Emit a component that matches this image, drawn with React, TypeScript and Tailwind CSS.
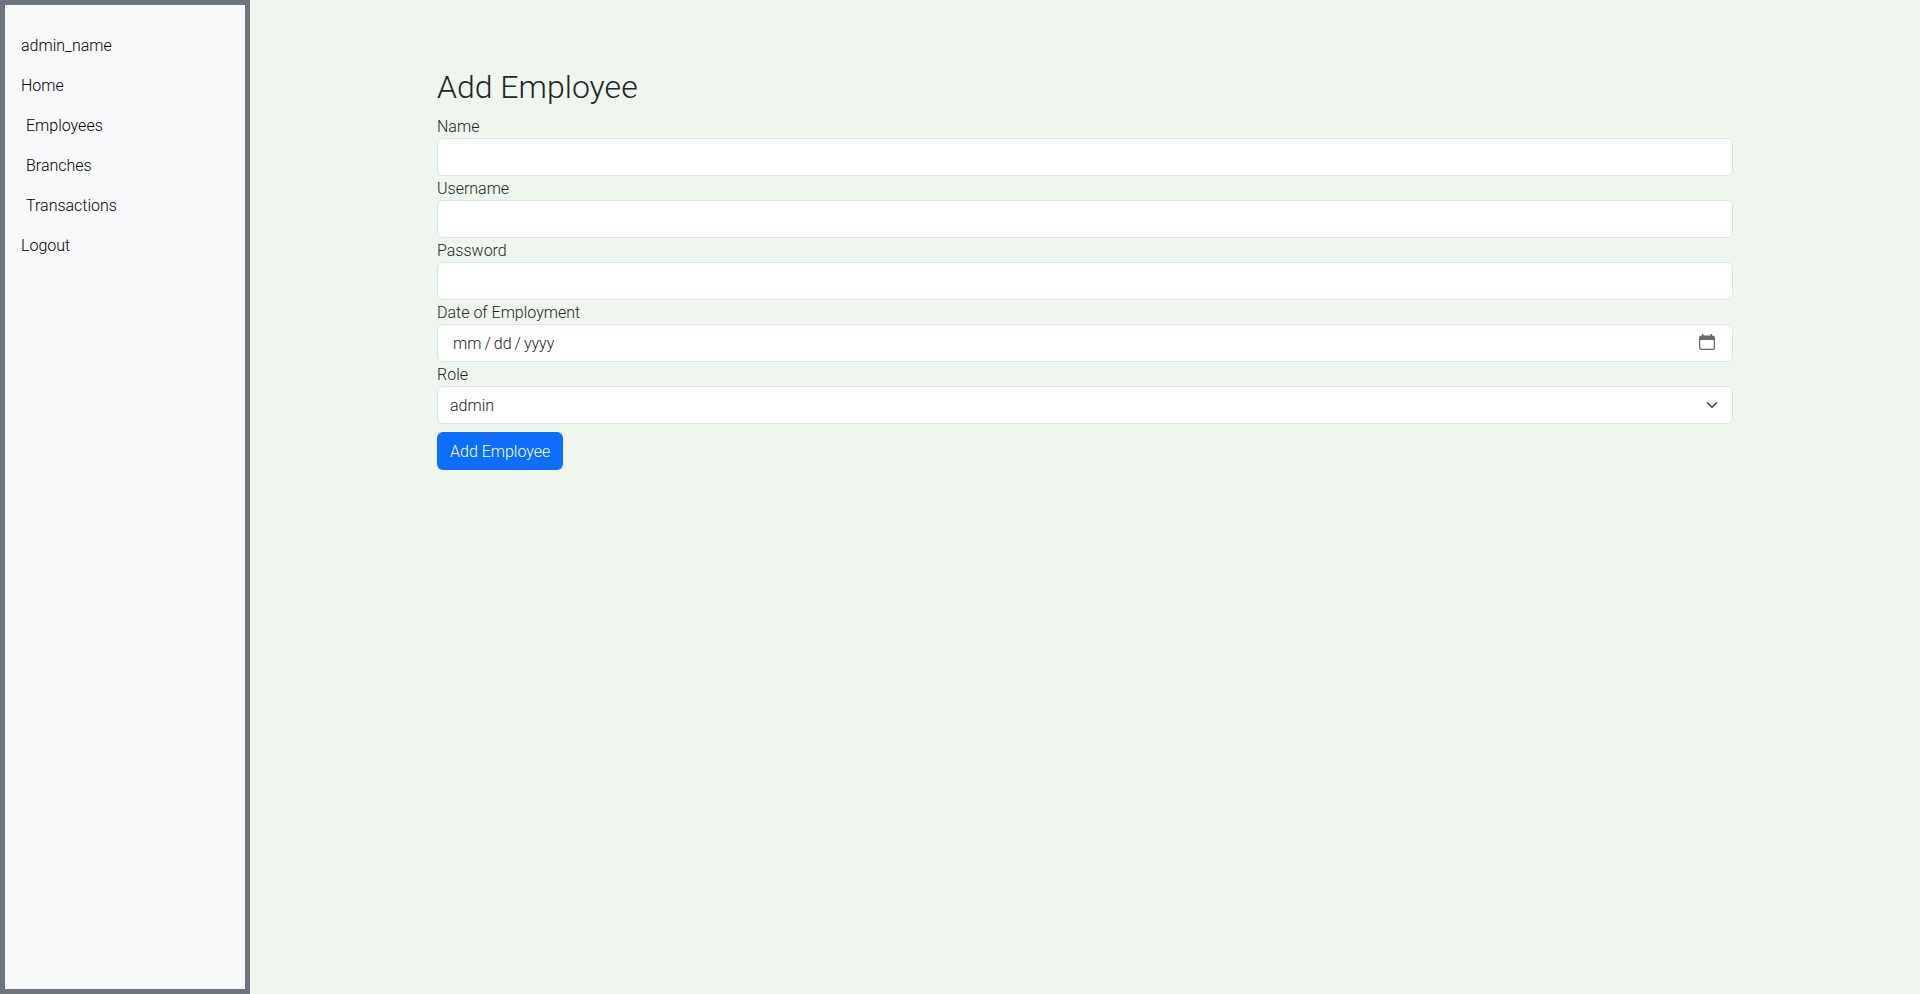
import React from "react";

const navItems = [
  { label: "admin_name", nested: false },
  { label: "Home", nested: false },
  { label: "Employees", nested: true },
  { label: "Branches", nested: true },
  { label: "Transactions", nested: true },
  { label: "Logout", nested: false },
];

const fields = [
  { id: "name", label: "Name", type: "text" },
  { id: "username", label: "Username", type: "text" },
  { id: "password", label: "Password", type: "password" },
];

const label = "block h-6 leading-[26px]";

const control =
  "block h-[38px] w-full rounded-md border border-[#dee2e6] bg-white px-3 pt-0.5 text-base font-light text-[#212529] outline-none focus:border-[#86b7fe]";

const dateParts =
  "[&::-webkit-datetime-edit]:pl-0.5 [&::-webkit-datetime-edit-text]:px-0.5 [&::-webkit-calendar-picker-indicator]:opacity-0";

function CalendarIcon() {
  return (
    <svg
      viewBox="0 0 16 16"
      className="pointer-events-none col-start-1 row-start-1 mr-[18px] mb-0.5 size-4 justify-self-end text-[#69696d]"
      aria-hidden="true"
    >
      <path
        fill="currentColor"
        fillRule="evenodd"
        d="M3 0h1.5v1.5h7V0H13v1.5h.5A2.5 2.5 0 0 1 16 4v9.500a2.500 2.500 0 0 1-2.500 2.500h-11A2.500 2.500 0 0 1 0 13.500V4a2.500 2.500 0 0 1 2.500-2.500H3zM1.250 6v7.500c0 .7.550 1.250 1.250 1.250h11c.7 0 1.250-.550 1.250-1.250V6z"
      />
    </svg>
  );
}

export default function App() {
  return (
    <div className="flex min-h-screen bg-[#eef6ed] font-[Roboto,sans-serif] text-base leading-6 font-light text-[#212529]">
      <nav className="w-[250px] shrink-0 border-[5px] border-[#6c757d] bg-[#f8f9fa] px-4 pt-[21px]">
        <ul>
          {navItems.map((item) => (
            <li key={item.label} className={item.nested ? "pl-[5px]" : ""}>
              <a href="#" className="block py-2 text-black">
                {item.label}
              </a>
            </li>
          ))}
        </ul>
      </nav>
      <main className="min-w-0 flex-1 px-[187px] pt-[68px]">
        <h1 className="mb-2 text-[32px] leading-[38px] font-light">Add Employee</h1>
        <form onSubmit={(e) => e.preventDefault()}>
          {fields.map((f) => (
            <div key={f.id}>
              <label htmlFor={f.id} className={label}>
                {f.label}
              </label>
              <input id={f.id} type={f.type} className={control} />
            </div>
          ))}
          <label htmlFor="date" className={label}>
            Date of Employment
          </label>
          <div className="grid items-center">
            <input id="date" type="date" className={`${control} ${dateParts} col-start-1 row-start-1`} />
            <CalendarIcon />
          </div>
          <label htmlFor="role" className={label}>
            Role
          </label>
          <div className="grid items-center">
            <select id="role" className={`${control} col-start-1 row-start-1 appearance-none`}>
              <option>admin</option>
            </select>
            <svg
              viewBox="0 0 16 16"
              className="pointer-events-none col-start-1 row-start-1 mr-[13px] h-3 w-4 justify-self-end"
              aria-hidden="true"
            >
              <path
                d="m2 5 6 6 6-6"
                fill="none"
                stroke="#343a40"
                strokeWidth="2"
                strokeLinecap="round"
                strokeLinejoin="round"
              />
            </svg>
          </div>
          <button type="submit" className="mt-2 h-[38px] rounded-md bg-[#0d6efd] px-[13px] pt-0.5 text-white">
            Add Employee
          </button>
        </form>
      </main>
    </div>
  );
}
